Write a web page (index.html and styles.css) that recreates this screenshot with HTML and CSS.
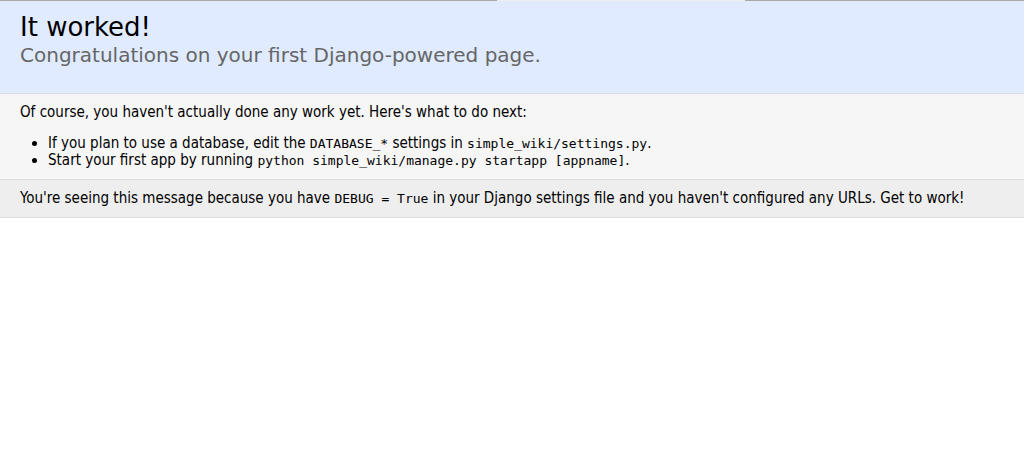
FILE: index.html
```html
<!DOCTYPE html>
<html lang="en">
<head>
<meta charset="utf-8">
<title>Welcome to Django</title>
<link rel="stylesheet" href="styles.css">
</head>
<body>
<div class="tab-edge"><span class="tab-edge-side"></span><span class="tab-edge-active"></span><span class="tab-edge-side"></span></div>
<header class="summary">
<h1>It worked!</h1>
<h2>Congratulations on your first Django-powered page.</h2>
</header>
<main class="instructions">
<p>Of course, you haven't actually done any work yet. Here's what to do next:</p>
<ul>
<li>If you plan to use a database, edit the <code>DATABASE_*</code> settings in <code>simple_wiki/settings.py</code>.</li>
<li>Start your first app by running <code>python simple_wiki/manage.py startapp [appname]</code>.</li>
</ul>
</main>
<footer class="explanation">
<p>You're seeing this message because you have <code>DEBUG = True</code> in your Django settings file and you haven't configured any URLs. Get to work!</p>
</footer>
</body>
</html>
```
FILE: styles.css
```css
* { box-sizing: border-box; margin: 0; padding: 0; }
body { background: #fff; color: #000; font: 15px/17px "DejaVu Sans Condensed", "DejaVu Sans", sans-serif; }
code { font: 13px/15px "DejaVu Sans Mono", monospace; }
.tab-edge { display: grid; grid-template-columns: 497fr 248fr 279fr; height: 1px; }
.tab-edge-side { background: #aca8a4; }
.tab-edge-active { background: #ededed; }
.summary { padding: 10px 20px 25px; background: #e0ebff; border-bottom: 1px solid #ddd; font-family: "DejaVu Sans", sans-serif; }
.summary h1 { font-size: 26px; line-height: 32px; font-weight: 400; }
.summary h2 { font-size: 20px; line-height: 25px; font-weight: 400; color: #666; }
.instructions { padding: 10px 20px; background: #f6f6f6; border-bottom: 1px solid #ddd; }
.instructions ul { margin-top: 14px; padding-left: 28px; }
.explanation { padding: 10px 20px; background: #eee; border-bottom: 1px solid #ddd; }
```
